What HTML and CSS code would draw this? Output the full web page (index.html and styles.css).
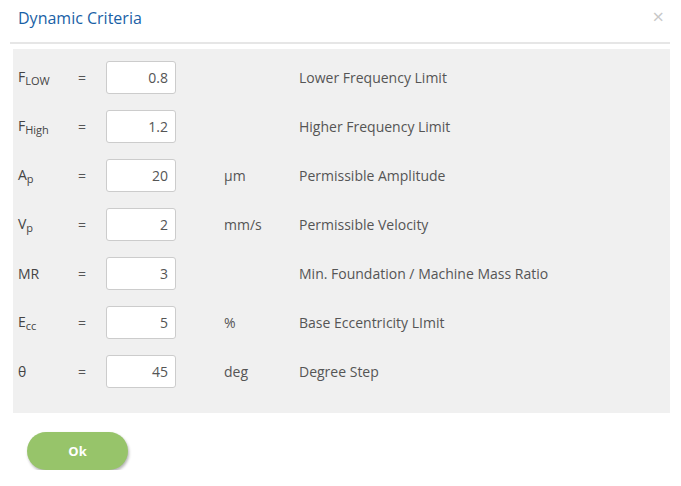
FILE: index.html
```html
<!DOCTYPE html>
<html lang="en">
<head>
    <title>Dynamic Criteria</title>
    <meta charset="utf-8">
    <link rel="stylesheet" href="styles.css">
</head>
<body>
    <div class="modal">
        <div class="modal-header">
            <h4 class="modal-title">Dynamic Criteria</h4>
            <span class="close">&times;</span>
        </div>

        <!-- criteria rows -->
        <div class="criteria">
            <div class="row">
                <span class="sym">F<sub>LOW</sub></span>
                <span class="eq">=</span>
                <input class="val" type="text" value="0.8">
                <span class="unit"></span>
                <span class="desc">Lower Frequency Limit</span>
            </div>
            <div class="row">
                <span class="sym">F<sub>High</sub></span>
                <span class="eq">=</span>
                <input class="val" type="text" value="1.2">
                <span class="unit"></span>
                <span class="desc">Higher Frequency Limit</span>
            </div>
            <div class="row">
                <span class="sym">A<sub>p</sub></span>
                <span class="eq">=</span>
                <input class="val" type="text" value="20">
                <span class="unit">µm</span>
                <span class="desc">Permissible Amplitude</span>
            </div>
            <div class="row">
                <span class="sym">V<sub>p</sub></span>
                <span class="eq">=</span>
                <input class="val" type="text" value="2">
                <span class="unit">mm/s</span>
                <span class="desc">Permissible Velocity</span>
            </div>
            <div class="row">
                <span class="sym">MR</span>
                <span class="eq">=</span>
                <input class="val" type="text" value="3">
                <span class="unit"></span>
                <span class="desc">Min. Foundation / Machine Mass Ratio</span>
            </div>
            <div class="row">
                <span class="sym">E<sub>cc</sub></span>
                <span class="eq">=</span>
                <input class="val" type="text" value="5">
                <span class="unit">%</span>
                <span class="desc">Base Eccentricity LImit</span>
            </div>
            <div class="row">
                <span class="sym">θ</span>
                <span class="eq">=</span>
                <input class="val" type="text" value="45">
                <span class="unit">deg</span>
                <span class="desc">Degree Step</span>
            </div>
        </div>

        <div class="modal-footer">
            <button class="btn-ok">Ok</button>
        </div>
    </div>
</body>
</html>
```

FILE: styles.css
```css
body {
    margin: 0;
    padding: 0;
    background-color: #fff;
    font-family: "Open Sans", Arial, sans-serif;
    color: #555;
}
.modal {
    width: 681px;
}
.modal-header {
    display: flex;
    justify-content: space-between;
    align-items: center;
    height: 42px;
    margin: 0 11px 0 10px;
    padding: 0 6px 0 8px;
    border-bottom: 2px solid #e6e6e6;
}
.modal-title {
    margin: 0 0 6px 0;
    font-size: 16px;
    font-weight: normal;
    color: #1a5fa6;
}
.close {
    font-size: 20px;
    color: #c8c8c8;
    line-height: 1;
    margin-bottom: 8px;
}
.criteria {
    margin: 5px 11px 0 13px;
    padding: 12px 0 25px 5px;
    background-color: #f0f0f0;
}
.row {
    display: grid;
    grid-template-columns: 60px 28px 70px 48px 75px 1fr;
    align-items: center;
    height: 33px;
    margin-bottom: 16px;
    font-size: 14px;
}
.row:last-child {
    margin-bottom: 0;
}
.sym {
    grid-column: 1;
    color: #444;
    font-size: 14px;
}
.sym sub {
    font-size: 11px;
    vertical-align: -3px;
}
.eq {
    grid-column: 2;
}
.val {
    grid-column: 3;
    box-sizing: border-box;
    width: 70px;
    height: 33px;
    padding: 0 7px 0 4px;
    border: 1px solid #ccc;
    border-radius: 3px;
    background-color: #fff;
    text-align: right;
    font-family: "Open Sans", Arial, sans-serif;
    font-size: 14px;
    color: #555;
}
.unit {
    grid-column: 5;
}
.desc {
    grid-column: 6;
}
.modal-footer {
    padding: 19px 0 0 27px;
}
.btn-ok {
    width: 101px;
    height: 38px;
    border: none;
    border-radius: 19px;
    background-color: #97c46a;
    color: #fff;
    font-family: "Open Sans", Arial, sans-serif;
    font-size: 13px;
    font-weight: bold;
    box-shadow: 1px 2px 3px rgba(0, 0, 0, 0.3);
    cursor: pointer;
}
```
